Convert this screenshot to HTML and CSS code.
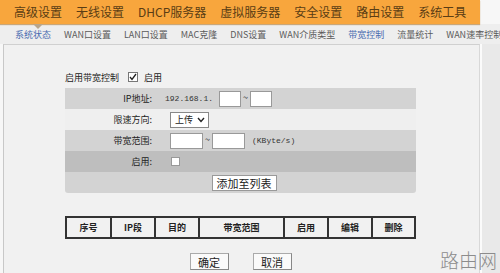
FILE: index.html
```html
<!DOCTYPE html>
<html lang="zh-CN">
<head>
  <meta charset="UTF-8">
  <title>带宽控制</title>
  <link rel="stylesheet" href="styles.css">
</head>
<body>
  <div class="topnav">
    <a class="active">高级设置</a>
    <a>无线设置</a>
    <a>DHCP服务器</a>
    <a>虚拟服务器</a>
    <a>安全设置</a>
    <a>路由设置</a>
    <a>系统工具</a>
  </div>

  <div class="subnav">
    <a class="on">系统状态</a>
    <a>WAN口设置</a>
    <a>LAN口设置</a>
    <a>MAC克隆</a>
    <a>DNS设置</a>
    <a>WAN介质类型</a>
    <a class="on">带宽控制</a>
    <a>流量统计</a>
    <a>WAN速率控制</a>
  </div>

  <div class="page">
    <div class="main">
      <div class="enable-line">
        <span>启用带宽控制</span>
        <span class="check checked">
          <svg width="8" height="8" viewBox="0 0 8 8"><path d="M1 4 L3 6.5 L7 1" fill="none" stroke="#222" stroke-width="1.3"/></svg>
        </span>
        <span>启用</span>
      </div>

      <div class="form">
        <div class="row dark">
          <div class="label">IP地址:</div>
          <div class="value">
            <span class="mono">192.168.1.</span>
            <span class="box ip"></span>
            <span class="tilde">~</span>
            <span class="box ip"></span>
          </div>
        </div>
        <div class="row light">
          <div class="label">限速方向:</div>
          <div class="value">
            <span class="select">上传
              <svg width="8" height="6" viewBox="0 0 8 6"><path d="M1 1 L4 4.5 L7 1" fill="none" stroke="#222" stroke-width="1.4"/></svg>
            </span>
          </div>
        </div>
        <div class="row dark">
          <div class="label">带宽范围:</div>
          <div class="value">
            <span class="box wide"></span>
            <span class="tilde">~</span>
            <span class="box wide"></span>
            <span class="mono unit">(KByte/s)</span>
          </div>
        </div>
        <div class="row darker">
          <div class="label">启用:</div>
          <div class="value">
            <span class="check small"></span>
          </div>
        </div>
        <div class="row dark last">
          <button class="add">添加至列表</button>
        </div>
      </div>

      <table class="list">
        <tr>
          <th class="c-no">序号</th>
          <th class="c-ip">IP段</th>
          <th class="c-dst">目的</th>
          <th class="c-bw">带宽范围</th>
          <th class="c-on">启用</th>
          <th class="c-edit">编辑</th>
          <th class="c-del">删除</th>
        </tr>
      </table>

      <div class="actions">
        <button>确定</button>
        <button>取消</button>
      </div>
    </div>
    <div class="side"></div>
  </div>

  <div class="watermark">路由网</div>
</body>
</html>
```

FILE: styles.css
```css
body {
  margin: 0;
  width: 500px;
  height: 273px;
  overflow: hidden;
  background-color: #f7f7f7;
  font-family: "Noto Sans CJK SC", "Liberation Sans", sans-serif;
  color: #222;
  position: relative;
}

a {
  cursor: pointer;
}

/* main menu */
.topnav {
  width: 480px;
  height: 24px;
  background-color: #f8a63d;
  box-shadow: 0 1px 1px #c9a77a;
  display: flex;
  align-items: center;
  gap: 14px;
  padding-left: 14px;
  box-sizing: border-box;
  position: relative;
  z-index: 1;
}

.topnav a {
  font-size: 12px;
  line-height: 24px;
  color: #5a3d14;
  position: relative;
}

.topnav a.active::after {
  content: "";
  position: absolute;
  left: 19px;
  top: 24px;
  border-left: 5px solid transparent;
  border-right: 5px solid transparent;
  border-top: 5px solid #b9a58a;
}

/* sub menu */
.subnav {
  height: 20px;
  background-color: #eeeeee;
  display: flex;
  align-items: center;
  gap: 13px;
  padding-left: 15px;
  white-space: nowrap;
  overflow: hidden;
}

.subnav a {
  font-size: 9px;
  color: #5a5a5a;
}

.subnav a.on {
  color: #4a6bb0;
}

/* content */
.page {
  display: flex;
  height: 229px;
}

.main {
  width: 477px;
  margin-left: 3px;
  border-top: 1px solid #d0d0d0;
  border-left: 1px solid #c8c8c8;
  border-right: 1px solid #d8d8d8;
  background-color: #f1f1f1;
  padding: 26px 0 0 61px;
  box-sizing: border-box;
}

.side {
  flex: 1;
  border-left: 2px solid #fbfbfb;
  background-color: #e9e9e9;
}

.enable-line {
  height: 12px;
  display: flex;
  align-items: center;
  font-size: 9px;
  margin-bottom: 5px;
}

.check {
  display: inline-flex;
  align-items: center;
  justify-content: center;
  width: 8px;
  height: 8px;
  border: 1px solid #777;
  background-color: #fff;
}

.enable-line .check {
  margin: 0 6px 0 9px;
}

.check.small {
  width: 7px;
  height: 7px;
  border-color: #999;
  margin-left: 6px;
}

.form {
  width: 351px;
  border-radius: 0 0 3px 3px;
  overflow: hidden;
}

.row {
  height: 21px;
  display: flex;
  align-items: center;
  font-size: 9px;
}

.row.dark {
  background-color: #d3d3d3;
}

.row.light {
  background-color: #efefef;
}

.row.darker {
  background-color: #bebebe;
}

.row.last {
  justify-content: center;
}

.label {
  width: 87px;
  text-align: right;
  padding-right: 3px;
}

.value {
  padding-left: 10px;
  display: flex;
  align-items: center;
}

.mono {
  font-family: "Liberation Mono", monospace;
  font-size: 8px;
  color: #333;
}

.unit {
  margin-left: 7px;
}

.box {
  display: inline-block;
  height: 14px;
  border: 1px solid #999;
  background-color: #fff;
}

.box.ip {
  width: 20px;
  margin-left: 6px;
}

.box.wide {
  width: 31px;
  margin-left: 5px;
}

.box.ip + .tilde + .box.ip,
.box.wide + .tilde + .box.wide {
  margin-left: 0;
}

.tilde {
  font-size: 9px;
  line-height: 9px;
  width: 9px;
  align-self: flex-start;
  margin-top: 2px;
  text-align: center;
}

.select {
  display: inline-flex;
  align-items: center;
  gap: 4px;
  margin-left: 5px;
  height: 14px;
  padding: 0 3px 0 4px;
  border: 1px solid #888;
  background-color: #fff;
  font-size: 9px;
}

.add {
  margin-left: 7px;
  height: 16px;
  padding: 0 4px;
  font-family: inherit;
  font-size: 11px;
  line-height: 14px;
  color: #222;
  background-color: #fff;
  border: 1px solid #999;
  border-radius: 0;
}

.list {
  margin-top: 23px;
  width: 351px;
  height: 23px;
  border: 1px solid #333;
  border-spacing: 0;
}

.list th {
  border: 1px solid #333;
  font-size: 9px;
  font-weight: bold;
  color: #222;
  padding: 0;
}

.c-no { width: 43px; }
.c-ip { width: 42px; }
.c-dst { width: 42px; }
.c-bw { width: 83px; }
.c-on { width: 42px; }
.c-edit { width: 42px; }

.actions {
  width: 351px;
  margin-top: 14px;
  display: flex;
  justify-content: center;
  gap: 24px;
}

.actions button {
  width: 39px;
  height: 17px;
  padding: 0;
  font-family: inherit;
  font-size: 11px;
  color: #222;
  background-color: #fafafa;
  border: 1px solid #aaa;
  border-right-color: #888;
  border-bottom-color: #888;
  border-radius: 0;
}

.watermark {
  position: absolute;
  left: 440px;
  top: 246px;
  font-size: 19px;
  font-weight: 300;
  color: #8c8c8c;
}
```
